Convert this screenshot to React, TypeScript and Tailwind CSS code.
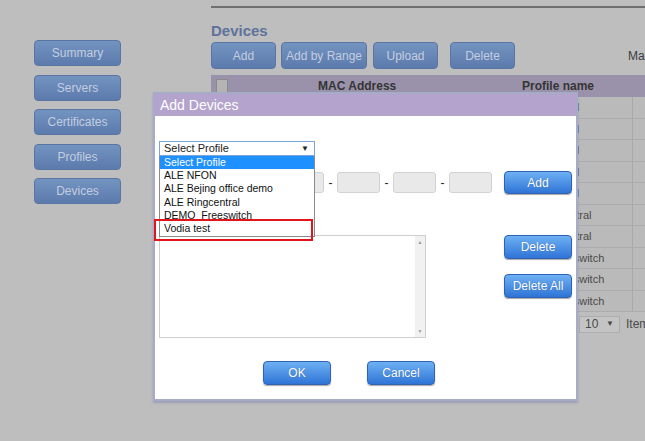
import type { ReactNode } from "react";

const sideItems = ["Summary", "Servers", "Certificates", "Profiles", "Devices"];

const rows = [
  "Vodia general",
  "Vodia general",
  "Vodia general",
  "Vodia general",
  "Vodia general",
  "ALE Ringcentral",
  "ALE Ringcentral",
  "DEMO_Freeswitch",
  "DEMO_Freeswitch",
  "DEMO_Freeswitch",
];

const options = [
  "Select Profile",
  "ALE NFON",
  "ALE Bejing office demo",
  "ALE Ringcentral",
  "DEMO_Freeswitch",
  "Vodia test",
];

// dimmed buttons behind the overlay
const DimButton = ({ children, className = "" }: { children: ReactNode; className?: string }) => (
  <div
    className={`flex items-center justify-center whitespace-nowrap rounded-[4px] border border-[#5a75a2] bg-gradient-to-b from-[#7393c0] to-[#5c7bad] text-[12px] text-[#c3cde0] ${className}`}
  >
    {children}
  </div>
);

// live blue buttons in the dialog
const BlueButton = ({ children, className = "" }: { children: ReactNode; className?: string }) => (
  <button
    className={`flex w-[68px] items-center justify-center whitespace-nowrap rounded-[4px] border border-[#2f62b5] bg-gradient-to-b from-[#6eb0f3] to-[#2f74d6] text-[12px] text-white shadow-[0_1px_1px_rgba(0,0,0,0.35)] [text-shadow:0_0_1px_rgba(0,0,0,0.3)] ${className}`}
  >
    {children}
  </button>
);

const MacInput = () => (
  <div className="h-[21px] w-[43px] rounded-[3px] border border-[#d2d2d2] bg-[#e9e9e9]" />
);

export default function App() {
  return (
    <div
      className="relative h-[441px] w-[645px] overflow-hidden bg-[#bebebe]"
      style={{ fontFamily: '"Liberation Sans", Arial, sans-serif' }}
    >
      {/* page behind the dialog */}
      <div className="flex h-full">
        {/* sidebar */}
        <div className="flex w-[211px] shrink-0 flex-col gap-[8.5px] pl-[34px] pt-[40px]">
          {sideItems.map((s) => (
            <DimButton key={s} className="h-[26px] w-[87px]">
              {s}
            </DimButton>
          ))}
        </div>

        {/* main */}
        <div className="flex-1 overflow-hidden pt-[6px]">
          <div className="h-[2px] w-[600px] bg-[#6f6f6f]" />
          <h1 className="mt-[14px] text-[15px] font-bold leading-[18px] text-[#5e729b]">Devices</h1>
          <div className="mt-[2px] flex h-[27px] w-[600px] items-center">
            <DimButton className="h-[27px] w-[65px]">Add</DimButton>
            <DimButton className="ml-[5px] h-[27px] w-[86px]">Add by Range</DimButton>
            <DimButton className="ml-[6px] h-[27px] w-[65px]">Upload</DimButton>
            <DimButton className="ml-[12px] h-[27px] w-[65px]">Delete</DimButton>
            <span className="ml-[113px] text-[12px] text-[#3c3c3c]">Max</span>
          </div>

          {/* table */}
          <div className="mt-[6px] w-[600px]">
            <div className="flex h-[22px] items-center bg-[#9a92aa] text-[12px] font-bold text-[#353535]">
              <div className="flex w-[22px] justify-center">
                <div className="h-[14px] w-[12px] border border-[#8a8a8a] bg-[#b4b4b4]" />
              </div>
              <div className="w-[267px] pl-[85px]">MAC Address</div>
              <div className="pl-[22px]">Profile name</div>
            </div>
            {rows.map((r, i) => (
              <div
                key={i}
                className="flex h-[21.5px] items-center border-b border-[#acacac] bg-[#bababa] text-[11px] text-[#4a4a4a]"
              >
                <div className="w-[301px]" />
                <div className="w-[120px] whitespace-nowrap">{r}</div>
                <div className="h-full border-l border-[#a9a9a9]" />
              </div>
            ))}
            <div className="flex h-[24px] items-center pl-[368px] text-[12px] text-[#4a4a4a]">
              <div className="flex h-[17px] w-[41px] items-center justify-between border border-[#adadad] bg-[#c4c4c4] px-[5px]">
                <span>10</span>
                <span className="text-[8px]">▼</span>
              </div>
              <span className="ml-[6px]">Items per page</span>
            </div>
          </div>
        </div>
      </div>

      {/* Add Devices dialog */}
      <div className="absolute left-[153px] top-[92px] flex h-[309px] w-[425px] flex-col border-2 border-[#a7abc8] bg-white shadow-[0_2px_2px_rgba(120,125,180,0.5)]">
        <div className="flex h-[22px] items-center bg-[#b3a3cd] pl-[5px] text-[14px] text-white">
          Add Devices
        </div>

        <div className="relative flex flex-1 flex-col pl-[4px]">
          {/* profile select */}
          <div className="mt-[25px] flex h-[15px] w-[156px] items-center justify-between border border-[#7ea3d6] pl-[4px] pr-[5px] text-[11px] text-[#222]">
            <span>Select Profile</span>
            <span className="text-[8px]">▼</span>
          </div>

          {/* MAC address inputs */}
          <div className="mt-[15px] flex items-center">
            <div className="ml-[10px] flex items-center">
              {[0, 1, 2, 3, 4, 5].map((n) => (
                <div key={n} className="flex items-center">
                  {n > 0 && <span className="w-[13px] text-center text-[12px] text-[#222]">-</span>}
                  <MacInput />
                </div>
              ))}
            </div>
            <BlueButton className="ml-[12px] h-[23px]">Add</BlueButton>
          </div>

          {/* list + delete buttons */}
          <div className="mt-[41px] flex items-start">
            <div className="flex h-[103px] w-[267px] border border-[#cfcfcf]">
              <div className="flex-1" />
              <div className="flex w-[10px] flex-col items-center justify-between bg-[#f1f1f1] py-[3px] text-[5px] leading-[6px] text-[#9a9a9a]">
                <span>▲</span>
                <span>▼</span>
              </div>
            </div>
            <div className="ml-[78px] flex flex-col gap-[15px]">
              <BlueButton className="h-[24px]">Delete</BlueButton>
              <BlueButton className="h-[24px]">Delete All</BlueButton>
            </div>
          </div>

          {/* footer */}
          <div className="mt-[23px] flex gap-[36px] pl-[104px]">
            <BlueButton className="h-[24px]">OK</BlueButton>
            <BlueButton className="h-[24px]">Cancel</BlueButton>
          </div>

          {/* open option list */}
          <div className="absolute left-[4px] top-[40px] w-[156px] border border-[#8a8a8a] border-t-0 bg-white text-[10.5px] text-[#111]">
            {options.map((o, i) => (
              <div
                key={o}
                className={`flex h-[13.3px] items-center pl-[4px] ${i === 0 ? "bg-[#1e90ff] text-white" : ""}`}
              >
                {o}
              </div>
            ))}
          </div>

          {/* red highlight */}
          <div className="absolute left-[-1px] top-[103px] h-[22px] w-[159px] border-2 border-[#e1141c]" />
        </div>
      </div>
    </div>
  );
}
